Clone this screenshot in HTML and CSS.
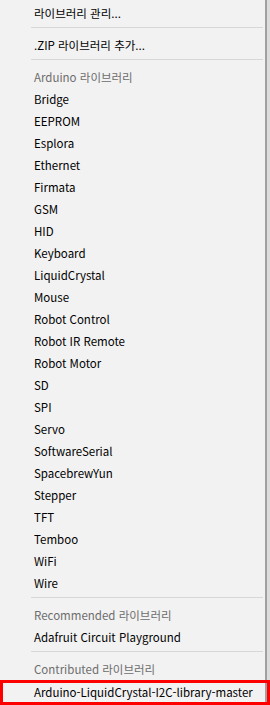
FILE: index.html
```html
<!DOCTYPE html>
<html lang="ko">
<head>
  <meta charset="UTF-8">
  <title>라이브러리 포함하기</title>
  <link rel="stylesheet" href="styles.css">
</head>
<body>

  <div class="menu">
    <div class="item">라이브러리 관리...</div>
    <div class="sep"></div>
    <div class="item">.ZIP 라이브러리 추가...</div>
    <div class="sep"></div>

    <div class="item header">Arduino 라이브러리</div>
    <div class="item">Bridge</div>
    <div class="item">EEPROM</div>
    <div class="item">Esplora</div>
    <div class="item">Ethernet</div>
    <div class="item">Firmata</div>
    <div class="item">GSM</div>
    <div class="item">HID</div>
    <div class="item">Keyboard</div>
    <div class="item">LiquidCrystal</div>
    <div class="item">Mouse</div>
    <div class="item">Robot Control</div>
    <div class="item">Robot IR Remote</div>
    <div class="item">Robot Motor</div>
    <div class="item">SD</div>
    <div class="item">SPI</div>
    <div class="item">Servo</div>
    <div class="item">SoftwareSerial</div>
    <div class="item">SpacebrewYun</div>
    <div class="item">Stepper</div>
    <div class="item">TFT</div>
    <div class="item">Temboo</div>
    <div class="item">WiFi</div>
    <div class="item">Wire</div>
    <div class="sep"></div>

    <div class="item header">Recommended 라이브러리</div>
    <div class="item">Adafruit Circuit Playground</div>
    <div class="sep"></div>

    <div class="item header">Contributed 라이브러리</div>
    <div class="item marked">Arduino-LiquidCrystal-I2C-library-master</div>
  </div>

</body>
</html>
```

FILE: styles.css
```css
body {
  margin: 0;
  background: #dcdcdc;
  font-family: "Noto Sans CJK KR", "Open Sans", sans-serif;
  font-size: 11.5px;
  color: #000;
}

.menu {
  width: 267px;
  height: 705px;
  box-sizing: border-box;
  background: #f2f2f2;
  border-right: 2px solid #a0a0a0;
  padding-top: 2px;
}

.item {
  height: 22px;
  line-height: 22px;
  padding-left: 34px;
  white-space: nowrap;
  box-sizing: border-box;
}

.header {
  color: #6d6d6d;
}

.sep {
  height: 7px;
  margin-left: 31px;
  margin-right: 2px;
}

.sep::after {
  content: "";
  display: block;
  height: 1px;
  background: #d7d7d7;
  margin-top: 3px;
}

/* red box drawn round the picked library */
.marked {
  width: 270px;
  height: 25px;
  line-height: 19px;
  border: 3px solid #ff0000;
  padding-left: 31px;
}
```
